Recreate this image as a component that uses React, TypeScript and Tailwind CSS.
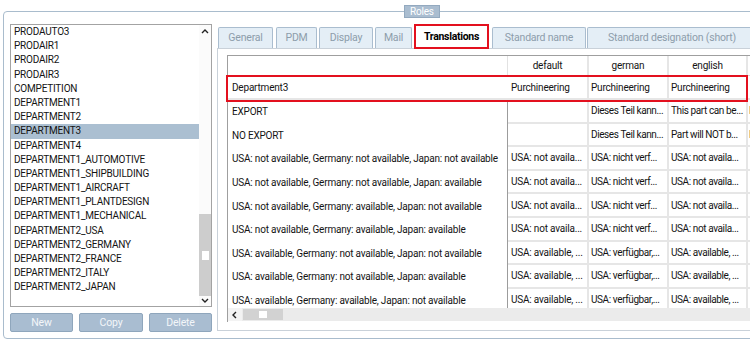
import React from 'react'

const items = [
  'PRODAUTO3',
  'PRODAIR1',
  'PRODAIR2',
  'PRODAIR3',
  'COMPETITION',
  'DEPARTMENT1',
  'DEPARTMENT2',
  'DEPARTMENT3',
  'DEPARTMENT4',
  'DEPARTMENT1_AUTOMOTIVE',
  'DEPARTMENT1_SHIPBUILDING',
  'DEPARTMENT1_AIRCRAFT',
  'DEPARTMENT1_PLANTDESIGN',
  'DEPARTMENT1_MECHANICAL',
  'DEPARTMENT2_USA',
  'DEPARTMENT2_GERMANY',
  'DEPARTMENT2_FRANCE',
  'DEPARTMENT2_ITALY',
  'DEPARTMENT2_JAPAN',
]

const tabs = [
  { label: 'General', w: 'w-[55px]', ml: 'ml-[1px]' },
  { label: 'PDM', w: 'w-[41px]', ml: 'ml-[3px]' },
  { label: 'Display', w: 'w-[54px]', ml: 'ml-[2px]' },
  { label: 'Mail', w: 'w-[37px]', ml: 'ml-[2px]' },
]

const rows = [
  { name: 'EXPORT', d: '', g: 'Dieses Teil kann...', e: 'This part can be...', x: 'D' },
  { name: 'NO EXPORT', d: '', g: 'Dieses Teil kann...', e: 'Part will NOT b...', x: 'D' },
  { name: 'USA: not available, Germany: not available, Japan: not available', d: 'USA: not availa...', g: 'USA: nicht verf...', e: 'USA: not availa...', x: '' },
  { name: 'USA: not available, Germany: not available, Japan: available', d: 'USA: not availa...', g: 'USA: nicht verf...', e: 'USA: not availa...', x: '' },
  { name: 'USA: not available, Germany: available, Japan: not available', d: 'USA: not availa...', g: 'USA: nicht verf...', e: 'USA: not availa...', x: '' },
  { name: 'USA: not available, Germany: available, Japan: available', d: 'USA: not availa...', g: 'USA: nicht verf...', e: 'USA: not availa...', x: '' },
  { name: 'USA: available, Germany: not available, Japan: not available', d: 'USA: available, ...', g: 'USA: verfügbar,...', e: 'USA: available, ...', x: '' },
  { name: 'USA: available, Germany: not available, Japan: available', d: 'USA: available, ...', g: 'USA: verfügbar,...', e: 'USA: available, ...', x: '' },
  { name: 'USA: available, Germany: available, Japan: not available', d: 'USA: available, ...', g: 'USA: verfügbar,...', e: 'USA: available, ...', x: '' },
]

function Chevron({ dir }: { dir: 'up' | 'down' | 'left' }) {
  const d = dir === 'up' ? 'M1 5 L4 2 L7 5' : dir === 'down' ? 'M1 2 L4 5 L7 2' : 'M5 1 L2 4 L5 7'
  return (
    <svg width="8" height="8" viewBox="0 0 8 8">
      <path d={d} fill="none" stroke="#222" strokeWidth="1.4" />
    </svg>
  )
}

export default function App() {
  return (
    <div
      className="w-[750px] h-[340px] bg-white overflow-hidden pt-[11px] pl-[3px] text-[10px] tracking-[-0.2px] text-[#141414]"
      style={{ fontFamily: 'Roboto, "Open Sans", sans-serif' }}
    >
      <div className="relative flex h-[328px] w-[780px] border border-[#a9bccd] rounded-[4px] pl-[6px] pt-[12px]">
        {/* group title */}
        <div className="absolute left-[400px] top-[-7px] h-[13px] px-[5px] flex items-center bg-[#aabdd0] border border-[#93a9bf] text-white text-[10px] leading-none">
          Roles
        </div>

        {/* left column */}
        <div className="w-[202px] flex flex-col">
          <div className="h-[283px] border border-[#a3a3a3] flex bg-white">
            <div className="flex-1 overflow-hidden">
              {items.map(it => (
                <div
                  key={it}
                  className={`h-[14.2px] leading-[14.2px] pl-[3px] whitespace-nowrap ${it === 'DEPARTMENT3' ? 'bg-[#abbfd1]' : ''}`}
                >
                  {it}
                </div>
              ))}
            </div>
            <div className="w-[12px] flex flex-col bg-[#fbfbfb]">
              <div className="h-[14px] flex items-center justify-center">
                <Chevron dir="up" />
              </div>
              <div className="flex-1" />
              <div className="h-[82px] bg-[#cdcdcd] flex justify-center pt-[37px]">
                <div className="w-[7px] h-[9px] bg-white" />
              </div>
              <div className="h-[10px] flex items-center justify-center">
                <Chevron dir="down" />
              </div>
            </div>
          </div>
          <div className="mt-[6px] flex gap-[6px]">
            {['New', 'Copy', 'Delete'].map((b, i) => (
              <div
                key={b}
                className={`${i === 1 ? 'w-[64px]' : 'w-[63px]'} h-[19px] flex items-center justify-center rounded-[2px] bg-[#a9bdd1] border border-[#8fa6bc] text-[#f3f6f9] text-[10.5px]`}
              >
                {b}
              </div>
            ))}
          </div>
        </div>

        {/* right column */}
        <div className="ml-[5px] flex-1 flex flex-col">
          <div className="h-[24px] flex items-end">
            {tabs.map(t => (
              <div
                key={t.label}
                className={`${t.w} ${t.ml} h-[21px] flex items-center justify-center bg-[#e4eef6] border border-b-0 border-[#aabdcf] rounded-t-[2px] text-[#8d9dab] text-[10.5px]`}
              >
                {t.label}
              </div>
            ))}
            <div className="relative z-10 ml-[2px] w-[75px] h-[25px] mb-[-1px] flex items-center justify-center bg-white border-2 border-[#e3101e] font-bold text-black text-[10.5px] tracking-[-0.3px]">
              Translations
            </div>
            <div className="ml-[3px] w-[94px] h-[21px] flex items-center justify-center bg-[#e4eef6] border border-b-0 border-[#aabdcf] rounded-t-[2px] text-[#8d9dab] text-[10.5px]">
              Standard name
            </div>
            <div className="ml-[1px] w-[170px] h-[21px] flex items-center justify-center bg-[#e4eef6] border border-b-0 border-[#aabdcf] rounded-t-[2px] text-[#8d9dab] text-[10.5px]">
              Standard designation (short)
            </div>
          </div>

          <div className="h-[283px] border border-[#c9d1d9] pl-[9px] pt-[6px]">
            <div className="relative h-[267px] border border-r-0 border-b-0 border-[#9f9f9f] flex flex-col">
              <div className="h-[252px] overflow-hidden">
                {/* header */}
                <div className="flex h-[20px] border-b border-[#dadada]">
                  <div className="w-[280px] shrink-0 border-r border-[#e2e2e2]" />
                  <div className="w-[81px] shrink-0 border-r-2 border-[#e6e6e6] flex items-center justify-center">default</div>
                  <div className="w-[80px] shrink-0 border-r-2 border-[#e6e6e6] flex items-center justify-center">german</div>
                  <div className="w-[79px] shrink-0 border-r-2 border-[#e6e6e6] flex items-center justify-center">english</div>
                  <div className="w-[80px] shrink-0" />
                </div>
                {/* selected row */}
                <div className="flex h-[24px] border-b-2 border-[#e6e6e6]">
                  <div className="w-[280px] shrink-0 pl-[4px] flex items-center">Department3</div>
                  <div className="w-[81px] shrink-0 border-r-2 border-[#e6e6e6] pl-[3px] flex items-center">Purchineering</div>
                  <div className="w-[80px] shrink-0 border-r-2 border-[#e6e6e6] pl-[2px] flex items-center">Purchineering</div>
                  <div className="w-[79px] shrink-0 border-r-2 border-[#e6e6e6] pl-[2px] flex items-center">Purchineering</div>
                  <div className="w-[80px] shrink-0" />
                </div>
                {rows.map(r => (
                  <div key={r.name} className="flex h-[23.6px]">
                    <div className="w-[280px] shrink-0 border-r border-[#9c9c9c] pl-[4px] flex items-center whitespace-nowrap overflow-hidden">
                      {r.name}
                    </div>
                    <div className="w-[81px] shrink-0 border-r-2 border-b-2 border-[#e6e6e6] pl-[3px] flex items-center whitespace-nowrap overflow-hidden">{r.d}</div>
                    <div className="w-[80px] shrink-0 border-r-2 border-b-2 border-[#e6e6e6] pl-[2px] flex items-center whitespace-nowrap overflow-hidden tracking-[-0.4px]">{r.g}</div>
                    <div className="w-[79px] shrink-0 border-r-2 border-b-2 border-[#e6e6e6] pl-[2px] flex items-center whitespace-nowrap overflow-hidden tracking-[-0.4px]">{r.e}</div>
                    <div className="w-[80px] shrink-0 border-b-2 border-[#e6e6e6] pl-[1px] flex items-center">{r.x}</div>
                  </div>
                ))}
              </div>
              {/* horizontal scrollbar */}
              <div className="h-[13px] flex items-center bg-[#ebebeb]">
                <div className="w-[14px] h-[13px] flex items-center justify-center bg-[#f3f3f3]">
                  <Chevron dir="left" />
                </div>
                <div className="ml-[1px] w-[40px] h-[11px] bg-[#d2d2d2] flex items-center justify-center">
                  <div className="w-[8px] h-[7px] bg-white" />
                </div>
              </div>
              {/* red highlight around edited row */}
              <div className="absolute left-[-2px] top-[19px] w-[522px] h-[27px] border-2 border-[#e3101e] pointer-events-none" />
            </div>
          </div>
        </div>
      </div>
    </div>
  )
}
